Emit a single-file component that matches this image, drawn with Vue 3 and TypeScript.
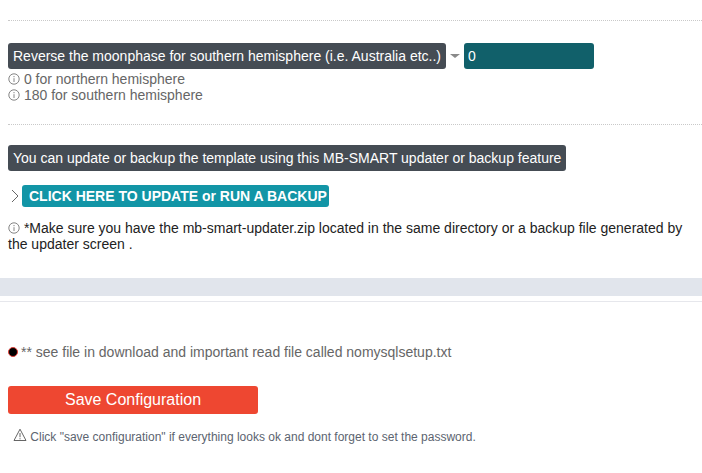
<script setup lang="ts">
const hints: string[] = ['0 for northern hemisphere', '180 for southern hemisphere']
</script>

<template>
  <div class="page">
    <div class="section first">
      <div class="row">
        <span class="label">Reverse the moonphase for southern hemisphere (i.e. Australia etc..)</span>
        <span class="caret"></span>
        <input class="field" value="0" />
      </div>
      <div v-for="h in hints" :key="h" class="hint">
        <svg class="info" viewBox="0 0 12 12"><circle cx="6" cy="6" r="5.2" /><path d="M6 5.2V9M6 3v1.2" /></svg>
        {{ h }}
      </div>
    </div>
    <div class="section second">
      <div class="label-row"><span class="label">You can update or backup the template using this MB-SMART updater or backup feature</span></div>
      <div class="link-row">
        <svg class="chev" viewBox="0 0 10 14"><path d="M2 1l6 6-6 6" /></svg>
        <a class="update">CLICK HERE TO UPDATE or RUN A BACKUP</a>
      </div>
      <p class="note">
        <svg class="info" viewBox="0 0 12 12"><circle cx="6" cy="6" r="5.2" /><path d="M6 5.2V9M6 3v1.2" /></svg>
        *Make sure you have the mb-smart-updater.zip located in the same directory or a backup file generated by the updater screen .
      </p>
    </div>
    <div class="band"></div>
    <div class="rule"></div>
    <div class="foot">
      <div class="read">
        <span class="dot"></span>
        ** see file in download and important read file called nomysqlsetup.txt
      </div>
      <button class="save">Save Configuration</button>
      <div class="warn">
        <svg class="tri" viewBox="0 0 14 14"><path d="M7 1.2L13 12.5H1Z" /><path d="M7 5v4.2M7 10.2v1.1" /></svg>
        Click "save configuration" if everything looks ok and dont forget to set the password.
      </div>
    </div>
  </div>
</template>

<style scoped>
.page { width: 702px; height: 473px; overflow: hidden; background: #fff; font-family: "Liberation Sans", Arial, sans-serif; font-size: 14px; color: #5c5f66; box-sizing: border-box; padding-top: 20px; }
.section { margin-left: 8px; border-top: 1px dotted #c9c9c9; }
.first { height: 104px; padding-top: 22px; box-sizing: border-box; }
.row { display: flex; align-items: center; height: 26px; }
.label { display: inline-block; height: 26px; line-height: 26px; padding: 0 5px; background: #454c54; color: #fff; border-radius: 3px; white-space: nowrap; }
.caret { width: 0; height: 0; margin: 0 4px; border-left: 5px solid transparent; border-right: 5px solid transparent; border-top: 4px solid #8a8a8a; }
.field { width: 130px; height: 26px; box-sizing: border-box; border: 0; padding: 0 4px; background: #11606a; color: #fff; border-radius: 3px; font: inherit; outline: none; }
.row + .hint { margin-top: 2px; }
.hint { height: 16px; line-height: 16px; color: #666; }
.info { width: 12px; height: 12px; vertical-align: -1px; fill: none; stroke: #666; stroke-width: 0.8; }
.second { height: 154px; padding-top: 20px; box-sizing: border-box; }
.label-row { height: 26px; }
.link-row { display: flex; align-items: center; margin-top: 14px; height: 22px; }
.chev { width: 10px; height: 14px; margin: 0 2px; fill: none; stroke: #555; stroke-width: 0.9; }
.update { display: block; height: 22px; line-height: 22px; width: 307px; box-sizing: border-box; padding-left: 7px; background: #1295a6; color: #fff; font-weight: 700; border-radius: 3px; white-space: nowrap; overflow: hidden; }
.note { margin: 13px 0 0; line-height: 16px; color: #222; width: 690px; }
.band { height: 18px; background: #e1e5ec; }
.rule { height: 1px; margin-top: 5px; background: #e6e7ec; }
.foot { padding: 42px 0 0 8px; }
.read { display: flex; align-items: center; gap: 3px; height: 16px; line-height: 16px; color: #666; }
.dot { width: 10px; height: 10px; box-sizing: border-box; background: #000; border: 1.5px solid #e0403a; border-radius: 50%; }
.save { display: block; width: 250px; height: 28px; margin-top: 26px; border: 0; padding: 0; background: #ee4731; color: #fff; border-radius: 3px; font: inherit; font-size: 16px; }
.warn { margin: 14px 0 0 5px; height: 14px; line-height: 14px; font-size: 12px; color: #5c6470; white-space: nowrap; }
.tri { width: 14px; height: 14px; vertical-align: -1px; fill: none; stroke: #555; stroke-width: 0.9; }
</style>
